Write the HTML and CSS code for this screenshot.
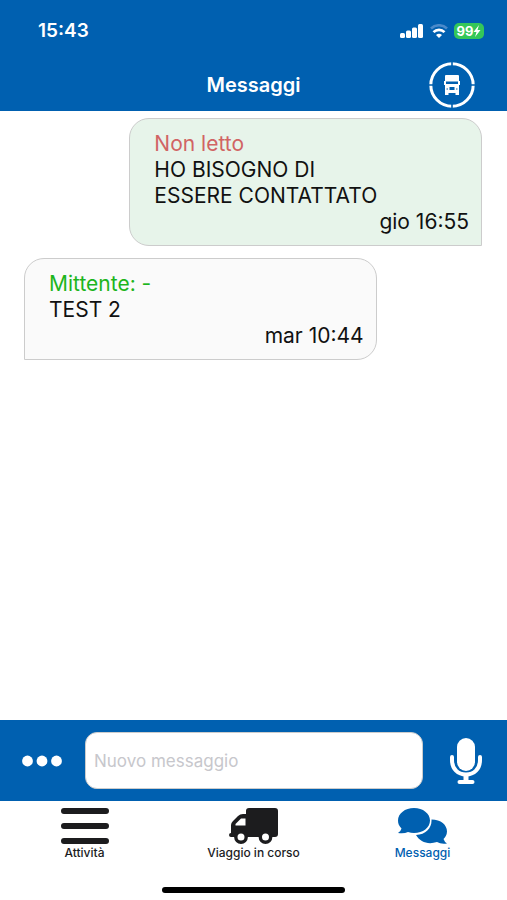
FILE: index.html
```html
<!DOCTYPE html>
<html lang="it">
<head>
<meta charset="utf-8">
<meta name="viewport" content="width=device-width, initial-scale=1">
<title>Messaggi</title>
<link rel="stylesheet" href="styles.css">
</head>
<body>
<div class="app">
  <header class="header">
    <div class="status">
      <time class="clock">15:43</time>
      <div class="indicators">
        <svg width="24" height="16" viewBox="0 0 24 16" fill="#fff" aria-hidden="true">
          <rect x="0" y="10" width="5" height="5" rx="1.5"/>
          <rect x="6" y="7.5" width="5" height="7.5" rx="1.5"/>
          <rect x="12" y="4.500" width="5" height="10.5" rx="1.5"/>
          <rect x="18" y="1" width="5" height="14" rx="1.5"/>
        </svg>
        <svg width="18" height="14" viewBox="0 0 18 14" fill="none" stroke-width="2.6" aria-hidden="true">
          <path d="M1 4.500 A11.5 11.5 0 0 1 17 4.500" stroke="#4a8aca"/>
          <path d="M3.500 8.200 A7.6 7.6 0 0 1 14.500 8.200" stroke="#fff"/>
          <path d="M9 14 L6 11 A4.5 4.5 0 0 1 12 11 Z" fill="#fff" stroke="none"/>
        </svg>
        <span class="battery">99<svg width="8" height="12" viewBox="0 0 7 12" fill="#fff" aria-hidden="true"><path d="M5.5 0 L0 7 H3 L1.500 12 L7 5 H4 Z"/></svg></span>
      </div>
    </div>
    <div class="titlebar">
      <h1 class="title">Messaggi</h1>
      <button class="vehicle" type="button" aria-label="Veicolo">
        <svg width="46" height="46" viewBox="0 0 46 46" aria-hidden="true">
          <circle cx="23" cy="23" r="21.2" fill="none" stroke="#fff" stroke-width="3"/>
          <path d="M23 0V4M23 42V46M0 23H4M42 23H46" stroke="#0060b0" stroke-width="1.6"/>
          <path fill="#fff" d="M17 13H29Q30 13 30 14V19H31V23H30V33H26.500V31H19.500V33H16V23H15V19H16V14Q16 13 17 13Z"/>
          <path fill="#0060b0" d="M17 19.500H29V22H17ZM20.500 25H25.500V28H20.500Z"/>
          <path d="M17.500 27H19M27 27H28.500" stroke="#0060b0" stroke-width="1"/>
        </svg>
      </button>
    </div>
  </header>

  <main class="messages">
    <article class="bubble sent">
      <p class="unread">Non letto</p>
      <p>HO BISOGNO DI<br>ESSERE CONTATTATO</p>
      <time class="when">gio 16:55</time>
    </article>
    <article class="bubble received">
      <p class="sender">Mittente: -</p>
      <p>TEST 2</p>
      <time class="when">mar 10:44</time>
    </article>
  </main>

  <form class="composer">
    <button class="tool" type="button" aria-label="Altro">
      <svg width="40" height="12" viewBox="0 0 40 12" fill="#fff" aria-hidden="true"><circle cx="5.5" cy="6" r="5.4"/><circle cx="20" cy="6" r="5.4"/><circle cx="34.5" cy="6" r="5.4"/></svg>
    </button>
    <input class="field" type="text" placeholder="Nuovo messaggio" aria-label="Nuovo messaggio">
    <button class="tool mic" type="button" aria-label="Registra">
      <svg width="32" height="48" viewBox="0 0 32 48" fill="none" stroke="#fff" aria-hidden="true">
        <rect x="7" y="1" width="18" height="33" rx="9" fill="#fff" stroke="none"/>
        <path d="M2 20V23C2 32 8 37.500 16 37.500S30 32 30 23V20" stroke-width="4" stroke-linecap="round"/>
        <path d="M16 38V44" stroke-width="5"/>
        <path d="M9.500 45H22.500" stroke-width="4" stroke-linecap="round"/>
      </svg>
    </button>
  </form>

  <nav class="tabs">
    <a class="tab" href="#attivita">
      <svg width="50" height="36" viewBox="0 0 50 36" stroke="#1c1c1e" stroke-width="6" stroke-linecap="round" aria-hidden="true"><path d="M4 3H46M4 18H46M4 33H46"/></svg>
      <span>Attività</span>
    </a>
    <a class="tab" href="#viaggio">
      <svg width="50" height="36" viewBox="0 0 50 36" aria-hidden="true">
        <path fill="#1c1c1e" d="M20 0H46Q49 0 49 3V26Q49 29 46 29H2Q0 29 0 27Q0 25 2 25V17Q2 15 4 13L9 8Q11 6 14 6H17V3Q17 0 20 0Z"/>
        <path fill="#fff" d="M6.500 17.500V16L12 10.500H16.500V17.500Z"/>
        <circle cx="12" cy="29" r="5.2" fill="#fff" stroke="#1c1c1e" stroke-width="3.4"/>
        <circle cx="36.500" cy="29" r="5.2" fill="#fff" stroke="#1c1c1e" stroke-width="3.4"/>
      </svg>
      <span>Viaggio in corso</span>
    </a>
    <a class="tab active" href="#messaggi" aria-current="page">
      <svg width="50" height="36" viewBox="0 0 50 36" fill="#0060b0" aria-hidden="true">
        <path d="M33.500 11.500C43 11.500 49 17 49 23.500C49 27 47 29.500 45.500 31Q46.500 34 49 35.500Q43 36.500 39 34C30 37 22 34 18 27C28 26.500 34 20 33.500 11.500Z"/>
        <path d="M16 0C25 0 32 5.500 32 12.500S25 25 16 25Q13 25 10 24Q6 26 0 25Q3 23 3.500 20.500C1 18 0 15.500 0 12.500C0 5.500 7 0 16 0Z"/>
      </svg>
      <span>Messaggi</span>
    </a>
  </nav>
  <div class="home"></div>
</div>
</body>
</html>
```
FILE: styles.css
```css
* { box-sizing: border-box; }

body {
  margin: 0;
  background: #fff;
  color: #111;
  font-family: Inter, "Liberation Sans", sans-serif;
}

h1, p { margin: 0; }

button {
  padding: 0;
  border: 0;
  background: none;
}

svg { display: block; flex: none; }

.app {
  display: flex;
  flex-direction: column;
  min-height: 100vh;
}

.header {
  background: #0060b0;
  color: #fff;
  padding-bottom: 2px;
}

.status {
  display: flex;
  align-items: center;
  justify-content: space-between;
  height: 61px;
  padding: 0 23px 0 38px;
}

.clock {
  font-size: 19px;
  font-weight: 600;
}

.indicators {
  display: flex;
  align-items: center;
  gap: 6px;
}

.battery {
  display: flex;
  align-items: center;
  justify-content: center;
  width: 30px;
  height: 16px;
  border-radius: 5px;
  background: #34c759;
  font-size: 13px;
  font-weight: 700;
}

.titlebar {
  display: grid;
  grid-template-columns: 1fr auto 1fr;
  align-items: center;
  height: 48px;
  padding: 0 32px;
}

.title {
  grid-column: 2;
  font-size: 20px;
  font-weight: 600;
}

.vehicle { justify-self: end; }

.messages {
  display: flex;
  flex: 1;
  flex-direction: column;
  gap: 12px;
  padding: 7px 25px 7px 24px;
}

.bubble {
  width: 77%;
  padding: 12px 12px 10px 24px;
  border: 1px solid #ccc;
  border-radius: 20px;
  font-size: 21px;
  line-height: 26px;
}

.sent {
  align-self: flex-end;
  border-bottom-right-radius: 0;
  background: #e7f4ea;
}

.received {
  border-bottom-left-radius: 0;
  background: #fafafa;
}

.unread { color: #d16464; }

.sender { color: #1db51d; }

.when {
  display: block;
  text-align: right;
}

.composer {
  display: flex;
  align-items: center;
  gap: 23px;
  padding: 12px 25px 12px 22px;
  background: #0060b0;
}

.field {
  flex: 1;
  min-width: 0;
  height: 57px;
  padding: 0 8px;
  border: 1px solid #ccc;
  border-radius: 12px;
  background: #fff;
  font: 17px Inter, "Liberation Sans", sans-serif;
}

.field::placeholder { color: #c7c7cc; }

.mic { margin-left: 4px; }

.tabs {
  display: grid;
  grid-template-columns: repeat(3, 1fr);
  padding-top: 7px;
}

.tab {
  display: flex;
  flex-direction: column;
  align-items: center;
  gap: 2px;
  color: #1c1c1e;
  font-size: 12px;
  font-weight: 500;
  line-height: 14px;
  text-decoration: none;
}

.active { color: #0060b0; }

.home {
  width: 36%;
  height: 6px;
  margin: 27px auto 7px;
  border-radius: 3px;
  background: #000;
}
```
